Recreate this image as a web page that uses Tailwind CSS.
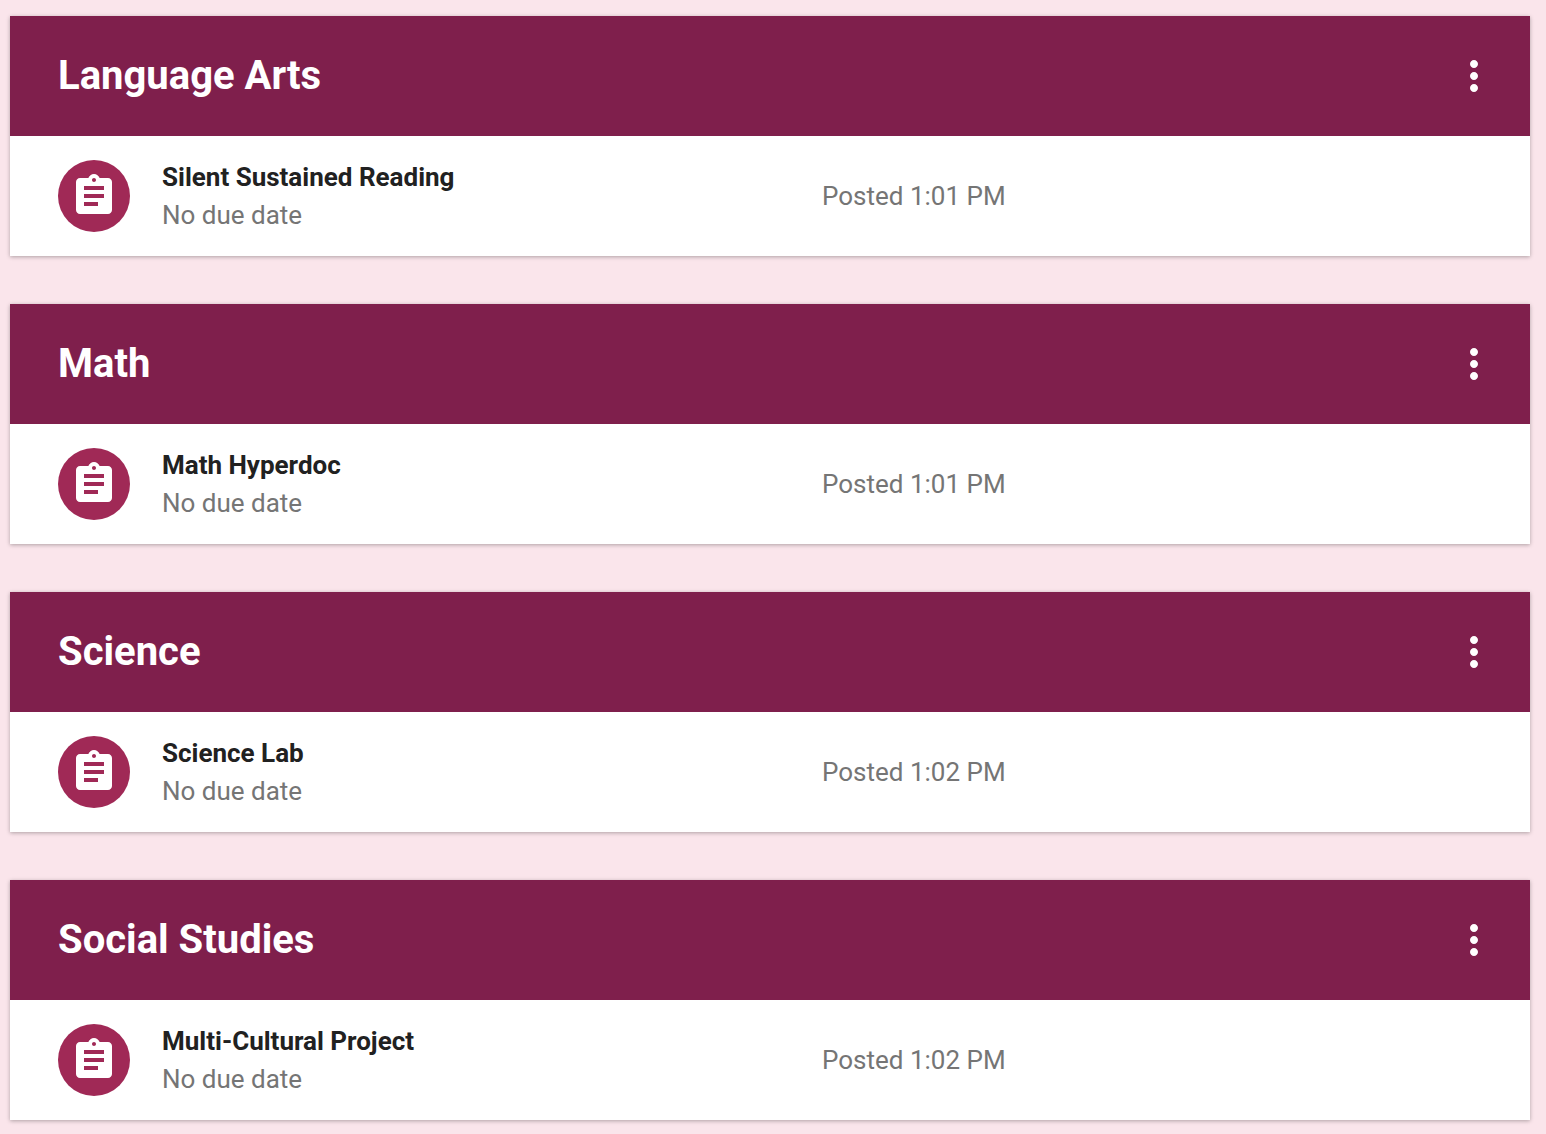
<!DOCTYPE html>
<html lang="en">
<head>
  <meta charset="UTF-8" />
  <meta name="viewport" content="width=device-width, initial-scale=1.0" />
  <title>Classwork</title>
  <script src="https://cdn.jsdelivr.net/npm/@tailwindcss/browser@4"></script>
</head>
<body class="bg-[#fae5eb] font-['Roboto',sans-serif]">

  <svg class="hidden">
    <symbol id="icon-assignment" viewBox="0 0 24 24">
      <path d="M19 3h-4.180C14.400 1.840 13.300 1 12 1c-1.300 0-2.400.840-2.820 2H5c-1.100 0-2 .900-2 2v14c0 1.100.900 2 2 2h14c1.100 0 2-.900 2-2V5c0-1.100-.900-2-2-2zm-7 0c.550 0 1 .450 1 1s-.450 1-1 1-1-.450-1-1 .450-1 1-1zm2 14H7v-2h7v2zm3-4H7v-2h10v2zm0-4H7V7h10v2z" />
    </symbol>
    <symbol id="icon-more" viewBox="0 0 24 24">
      <path d="M12 8c1.100 0 2-.900 2-2s-.900-2-2-2-2 .900-2 2 .900 2 2 2zm0 2c-1.100 0-2 .900-2 2s.900 2 2 2 2-.900 2-2-.900-2-2-2zm0 6c-1.100 0-2 .900-2 2s.900 2 2 2 2-.900 2-2-.900-2-2-2z" />
    </symbol>
  </svg>

  <main class="flex flex-col gap-12 pt-4 pb-3 pl-[10px] pr-4">
    <!-- Language Arts -->
    <section class="bg-white shadow-[0_1px_4px_rgba(0,0,0,0.3)]">
      <header class="flex items-center justify-between h-[120px] pl-12 pr-8 bg-[#7f1f4c] text-white">
        <h2 class="text-[40px] leading-[48px] font-bold">Language Arts</h2>
        <button type="button" aria-label="Language Arts options" class="cursor-pointer">
          <svg class="size-12 fill-current"><use href="#icon-more" /></svg>
        </button>
      </header>
      <article class="flex items-center gap-8 h-[120px] px-12">
        <div class="flex items-center justify-center size-[72px] rounded-full bg-[#a02956] text-white">
          <svg class="size-12 fill-current"><use href="#icon-assignment" /></svg>
        </div>
        <div class="flex-1 text-[26px] leading-[38px]">
          <h3 class="font-bold text-[#212121]">Silent Sustained Reading</h3>
          <p class="text-[#757575]">No due date</p>
        </div>
        <p class="flex-1 -ml-8 text-[26px] leading-[38px] text-[#757575]">Posted 1:01 PM</p>
      </article>
    </section>

    <!-- Math -->
    <section class="bg-white shadow-[0_1px_4px_rgba(0,0,0,0.3)]">
      <header class="flex items-center justify-between h-[120px] pl-12 pr-8 bg-[#7f1f4c] text-white">
        <h2 class="text-[40px] leading-[48px] font-bold">Math</h2>
        <button type="button" aria-label="Math options" class="cursor-pointer">
          <svg class="size-12 fill-current"><use href="#icon-more" /></svg>
        </button>
      </header>
      <article class="flex items-center gap-8 h-[120px] px-12">
        <div class="flex items-center justify-center size-[72px] rounded-full bg-[#a02956] text-white">
          <svg class="size-12 fill-current"><use href="#icon-assignment" /></svg>
        </div>
        <div class="flex-1 text-[26px] leading-[38px]">
          <h3 class="font-bold text-[#212121]">Math Hyperdoc</h3>
          <p class="text-[#757575]">No due date</p>
        </div>
        <p class="flex-1 -ml-8 text-[26px] leading-[38px] text-[#757575]">Posted 1:01 PM</p>
      </article>
    </section>

    <!-- Science -->
    <section class="bg-white shadow-[0_1px_4px_rgba(0,0,0,0.3)]">
      <header class="flex items-center justify-between h-[120px] pl-12 pr-8 bg-[#7f1f4c] text-white">
        <h2 class="text-[40px] leading-[48px] font-bold">Science</h2>
        <button type="button" aria-label="Science options" class="cursor-pointer">
          <svg class="size-12 fill-current"><use href="#icon-more" /></svg>
        </button>
      </header>
      <article class="flex items-center gap-8 h-[120px] px-12">
        <div class="flex items-center justify-center size-[72px] rounded-full bg-[#a02956] text-white">
          <svg class="size-12 fill-current"><use href="#icon-assignment" /></svg>
        </div>
        <div class="flex-1 text-[26px] leading-[38px]">
          <h3 class="font-bold text-[#212121]">Science Lab</h3>
          <p class="text-[#757575]">No due date</p>
        </div>
        <p class="flex-1 -ml-8 text-[26px] leading-[38px] text-[#757575]">Posted 1:02 PM</p>
      </article>
    </section>

    <!-- Social Studies -->
    <section class="bg-white shadow-[0_1px_4px_rgba(0,0,0,0.3)]">
      <header class="flex items-center justify-between h-[120px] pl-12 pr-8 bg-[#7f1f4c] text-white">
        <h2 class="text-[40px] leading-[48px] font-bold">Social Studies</h2>
        <button type="button" aria-label="Social Studies options" class="cursor-pointer">
          <svg class="size-12 fill-current"><use href="#icon-more" /></svg>
        </button>
      </header>
      <article class="flex items-center gap-8 h-[120px] px-12">
        <div class="flex items-center justify-center size-[72px] rounded-full bg-[#a02956] text-white">
          <svg class="size-12 fill-current"><use href="#icon-assignment" /></svg>
        </div>
        <div class="flex-1 text-[26px] leading-[38px]">
          <h3 class="font-bold text-[#212121]">Multi-Cultural Project</h3>
          <p class="text-[#757575]">No due date</p>
        </div>
        <p class="flex-1 -ml-8 text-[26px] leading-[38px] text-[#757575]">Posted 1:02 PM</p>
      </article>
    </section>
  </main>

</body>
</html>
